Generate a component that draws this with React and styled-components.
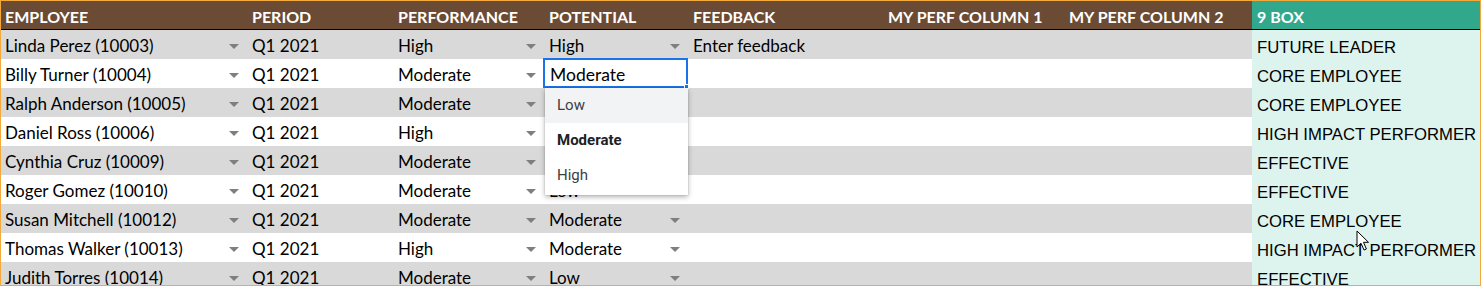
import React from "react";
import styled, { createGlobalStyle } from "styled-components";

const Global = createGlobalStyle`
  html, body { margin: 0; padding: 0; background: #ffffff; }
  * { box-sizing: border-box; }
`;

const COLS = "247px 146px 151px 144px 195px 181px 187px 1fr";

const Sheet = styled.div`
  position: relative;
  width: 1481px;
  height: 286px;
  border: 1px solid #f4a93b;
  overflow: hidden;
  background: #ffffff;
`;

const HeaderRow = styled.div`
  display: grid;
  grid-template-columns: ${COLS};
  height: 29px;
  border-bottom: 1px solid #000000;
`;

const HeadCell = styled.div`
  display: flex;
  align-items: center;
  padding: 2px 0 0 ${(p) => (p.$box ? "5px" : "4px")};
  background: ${(p) => (p.$box ? "#31a88b" : "#6b4b34")};
  color: #ffffff;
  font-family: Lato, "Open Sans", sans-serif;
  font-weight: 700;
  font-size: 16px;
  white-space: nowrap;
`;

const Row = styled.div`
  display: grid;
  grid-template-columns: ${COLS};
  height: 29px;
  background: ${(p) => (p.$alt ? "#d9d9d9" : "#ffffff")};
`;

const Cell = styled.div`
  position: relative;
  display: flex;
  align-items: center;
  justify-content: space-between;
  padding: 2px 9px 0 4px;
  font-family: Lato, "Open Sans", sans-serif;
  font-size: 17px;
  color: #000000;
  white-space: nowrap;
`;

const BoxCell = styled.div`
  display: flex;
  align-items: center;
  padding: 6px 0 0 5px;
  background: #ddf3ee;
  font-family: "Liberation Sans", Arial, sans-serif;
  font-size: 16.7px;
  color: #000000;
  white-space: nowrap;
`;

const Caret = styled.span`
  width: 0;
  height: 0;
  margin-top: 1px;
  border-left: 5px solid transparent;
  border-right: 5px solid transparent;
  border-top: 5px solid #7f7f7f;
`;

const Editor = styled.div`
  position: absolute;
  left: -2px;
  top: -1px;
  width: 145px;
  height: 30px;
  border: 2px solid #1a73e8;
  background: #ffffff;
  display: flex;
  align-items: center;
  padding: 2px 0 0 5px;
  font-family: Lato, "Open Sans", sans-serif;
  font-size: 17.5px;
  color: #000000;
  z-index: 2;
`;

const Handle = styled.span`
  position: absolute;
  right: -3px;
  bottom: -3px;
  width: 5px;
  height: 5px;
  background: #1a73e8;
  border: 1px solid #ffffff;
`;

const Menu = styled.div`
  position: absolute;
  left: 0;
  top: 29px;
  width: 143px;
  padding: 0 0 2px;
  background: #ffffff;
  box-shadow: 0 2px 5px rgba(0, 0, 0, 0.3), 0 0 1px rgba(0, 0, 0, 0.25);
  z-index: 3;
`;

const MenuItem = styled.div`
  height: 35px;
  display: flex;
  align-items: center;
  padding: 0 0 2px 12px;
  font-family: Roboto, "Noto Sans", sans-serif;
  font-size: 15px;
  font-weight: ${(p) => (p.$selected ? 700 : 400)};
  color: ${(p) => (p.$selected ? "#202124" : "#3c4043")};
  background: ${(p) => (p.$hover ? "#f1f3f4" : "transparent")};
`;

const Cursor = styled.svg`
  position: absolute;
  left: 1355px;
  top: 229px;
  z-index: 5;
`;

const headers = [
  "EMPLOYEE",
  "PERIOD",
  "PERFORMANCE",
  "POTENTIAL",
  "FEEDBACK",
  "MY PERF COLUMN 1",
  "MY PERF COLUMN 2",
];

const rows = [
  { name: "Linda Perez (10003)", perf: "High", pot: "High", fb: "Enter feedback", box: "FUTURE LEADER" },
  { name: "Billy Turner (10004)", perf: "Moderate", pot: "Moderate", fb: "", box: "CORE EMPLOYEE", editing: true },
  { name: "Ralph Anderson (10005)", perf: "Moderate", pot: "Moderate", fb: "", box: "CORE EMPLOYEE" },
  { name: "Daniel Ross (10006)", perf: "High", pot: "Moderate", fb: "", box: "HIGH IMPACT PERFORMER" },
  { name: "Cynthia Cruz (10009)", perf: "Moderate", pot: "Low", fb: "", box: "EFFECTIVE" },
  { name: "Roger Gomez (10010)", perf: "Moderate", pot: "Low", fb: "", box: "EFFECTIVE" },
  { name: "Susan Mitchell (10012)", perf: "Moderate", pot: "Moderate", fb: "", box: "CORE EMPLOYEE" },
  { name: "Thomas Walker (10013)", perf: "High", pot: "Moderate", fb: "", box: "HIGH IMPACT PERFORMER" },
  { name: "Judith Torres (10014)", perf: "Moderate", pot: "Low", fb: "", box: "EFFECTIVE" },
];

const options = ["Low", "Moderate", "High"];

export default function App() {
  return (
    <>
      <Global />
      <Sheet>
        <HeaderRow>
          {headers.map((h) => (
            <HeadCell key={h}>{h}</HeadCell>
          ))}
          <HeadCell $box>9 BOX</HeadCell>
        </HeaderRow>
        {rows.map((r, i) => (
          <Row key={r.name} $alt={i % 2 === 0}>
            <Cell>
              <span>{r.name}</span>
              <Caret />
            </Cell>
            <Cell>Q1 2021</Cell>
            <Cell>
              <span>{r.perf}</span>
              <Caret />
            </Cell>
            <Cell>
              {r.editing ? (
                <>
                  <Editor>
                    Moderate
                    <Handle />
                  </Editor>
                  <Menu>
                    {options.map((o, k) => (
                      <MenuItem key={o} $hover={k === 0} $selected={o === "Moderate"}>
                        {o}
                      </MenuItem>
                    ))}
                  </Menu>
                </>
              ) : (
                <>
                  <span>{r.pot}</span>
                  <Caret />
                </>
              )}
            </Cell>
            <Cell>{r.fb}</Cell>
            <Cell />
            <Cell />
            <BoxCell>{r.box}</BoxCell>
          </Row>
        ))}
        <Cursor width="14" height="22" viewBox="0 0 14 22">
          <path
            d="M1 1 L1 17 L5 13.2 L8 20 L10.4 19 L7.5 12.3 L12.5 12.3 Z"
            fill="#ffffff"
            stroke="#000000"
            strokeWidth="1"
            strokeLinejoin="round"
          />
        </Cursor>
      </Sheet>
    </>
  );
}
